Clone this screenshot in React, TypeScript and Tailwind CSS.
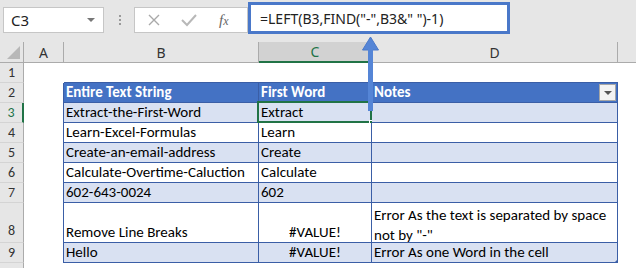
import React from 'react';

const blue = 'border-[#3a5ea6]';

type Row = {
  n: number;
  h: string;
  cells?: [string, string, string];
  kind?: 'head' | 'band' | 'plain';
};

const rows: Row[] = [
  { n: 1, h: 'h-[20px]' },
  { n: 2, h: 'h-[20px]', cells: ['Entire Text String', 'First Word', 'Notes'], kind: 'head' },
  { n: 3, h: 'h-[20px]', cells: ['Extract-the-First-Word', 'Extract', ''], kind: 'band' },
  { n: 4, h: 'h-[20px]', cells: ['Learn-Excel-Formulas', 'Learn', ''], kind: 'plain' },
  { n: 5, h: 'h-[20px]', cells: ['Create-an-email-address', 'Create', ''], kind: 'band' },
  { n: 6, h: 'h-[20px]', cells: ['Calculate-Overtime-Caluction', 'Calculate', ''], kind: 'plain' },
  { n: 7, h: 'h-[20px]', cells: ['602-643-0024', '602', ''], kind: 'band' },
  { n: 8, h: 'h-[40px]', cells: ['Remove Line Breaks', '#VALUE!', 'Error As the text is separated by space not by "-"'], kind: 'plain' },
  { n: 9, h: 'h-[20px]', cells: ['Hello', '#VALUE!', 'Error As one Word in the cell'], kind: 'band' },
  { n: 10, h: 'h-[20px]' },
];

function SheetRow({ row }: { row: Row }) {
  const inTable = !!row.cells;
  const bg = row.kind === 'head' ? 'bg-[#4472c4] text-white font-bold' : row.kind === 'band' ? 'bg-[#d9e1f2]' : 'bg-white';
  const lineB = row.n === 1 || inTable ? `border-b ${blue}` : '';
  const selected = row.n === 3;
  return (
    <div className={`flex ${row.h} shrink-0`}>
      <div
        className={`w-[24px] shrink-0 flex items-center justify-center bg-[#e6e6e6] border-b border-[#d4d4d4] text-[14px] ${
          selected ? 'border-r-2 border-r-[#217346] bg-[#d2d2d2] text-[#217346]' : 'border-r border-r-[#ababab] text-[#333]'
        } ${row.n === 8 ? 'items-end pb-[1px]' : ''}`}
      >
        {row.n < 10 ? row.n : ''}
      </div>
      <div className={`w-[40px] shrink-0 bg-white ${inTable ? `border-r ${blue}` : ''}`} />
      {(['w-[195px]', 'w-[113px]', 'w-[246px]'] as const).map((w, i) => {
        const text = row.cells ? row.cells[i] : '';
        const isValue = text === '#VALUE!';
        const wrap = row.n === 8 && i === 2;
        return (
          <div
            key={i}
            className={`${w} shrink-0 relative flex px-[2px] ${inTable ? `border-r ${blue} ${bg}` : 'bg-white'} ${lineB} ${
              isValue ? 'justify-center' : ''
            } ${wrap ? 'items-start pt-[2px] leading-[20px]' : 'items-end leading-[19px]'}`}
          >
            <span className="whitespace-pre-wrap">{text}</span>
            {selected && i === 1 && (
              <>
                <div className="absolute -left-[2px] -top-[2px] -right-[1px] -bottom-[1px] border-2 border-[#217346]" />
                <div className="absolute -right-[4px] -bottom-[4px] w-[6px] h-[6px] bg-[#217346] border border-white" />
              </>
            )}
            {row.kind === 'head' && i === 2 && (
              <div className="absolute right-[1px] top-[1px] w-[17px] h-[17px] bg-[#f3f3f3] border border-[#a6a6a6] flex items-center justify-center">
                <div className="w-0 h-0 border-l-[4px] border-r-[4px] border-t-[4px] border-l-transparent border-r-transparent border-t-[#555]" />
              </div>
            )}
            {row.n === 9 && i === 2 && (
              <div className="absolute -right-[1px] -bottom-[1px] w-0 h-0 border-l-[4px] border-b-[4px] border-l-transparent border-b-[#3a5ea6]" />
            )}
          </div>
        );
      })}
      <div className="flex-1 bg-white" />
    </div>
  );
}

export default function App() {
  return (
    <div
      className="w-[636px] h-[268px] overflow-hidden bg-[#e6e6e6] relative flex flex-col text-[15px] text-black"
      style={{ fontFamily: 'Carlito, Calibri, Lato, sans-serif' }}
    >
      {/* Formula bar */}
      <div className="h-[42px] shrink-0 flex items-start" style={{ fontFamily: '"Segoe UI", "Noto Sans", sans-serif' }}>
        <div className="mt-[7px] ml-[3px] w-[101px] h-[26px] bg-white border border-[#c6c6c6] flex items-center justify-between pl-[7px] pr-[8px] text-[15px] text-[#222]">
          <span>C3</span>
          <div className="w-0 h-0 border-l-[4px] border-r-[4px] border-t-[4px] border-l-transparent border-r-transparent border-t-[#777]" />
        </div>
        <div className="mt-[15px] ml-[15px] flex flex-col gap-[2px]">
          <div className="w-[2px] h-[2px] bg-[#9a9a9a]" />
          <div className="w-[2px] h-[2px] bg-[#9a9a9a]" />
          <div className="w-[2px] h-[2px] bg-[#9a9a9a]" />
        </div>
        <div className="mt-[7px] ml-[13px] w-[114px] h-[26px] bg-white border border-[#c6c6c6] flex items-center">
          <svg width="14" height="14" viewBox="0 0 14 14" className="ml-[12px]">
            <path d="M2 2 L12 12 M12 2 L2 12" stroke="#a9a9a9" strokeWidth="1.4" />
          </svg>
          <svg width="16" height="14" viewBox="0 0 16 14" className="ml-[20px]">
            <path d="M1 7 L6 12 L15 2" stroke="#b8b8b8" strokeWidth="2" fill="none" />
          </svg>
          <span className="ml-[22px] text-[15px] italic text-[#666]" style={{ fontFamily: '"Liberation Serif", serif' }}>
            f<span className="text-[12px]">x</span>
          </span>
        </div>
        <div className="mt-[2px] w-[262px] h-[32px] bg-white border-[3px] border-[#4a78c9] flex items-center pl-[9px] text-[14px] text-[#222]">
          =LEFT(B3,FIND("-",B3&amp;" ")-1)
        </div>
      </div>

      {/* Column headers */}
      <div className="flex h-[21px] shrink-0 border-b border-[#ababab] text-[14px] text-[#333]" style={{ fontFamily: '"Segoe UI", "Noto Sans", sans-serif' }}>
        <div className="w-[24px] shrink-0 border-r border-[#ababab] flex items-end justify-end pr-[3px] pb-[3px]">
          <svg width="13" height="13" viewBox="0 0 13 13">
            <polygon points="13,0 13,13 0,13" fill="#b8b8b8" />
          </svg>
        </div>
        <div className="w-[40px] shrink-0 border-r border-[#ababab] flex items-center justify-center">A</div>
        <div className="w-[195px] shrink-0 border-r border-[#ababab] flex items-center justify-center">B</div>
        <div className="w-[113px] shrink-0 border-r border-[#ababab] flex items-center justify-center bg-[#d2d2d2] text-[#217346] border-b-2 border-b-[#217346] -mb-[1px]">C</div>
        <div className="w-[246px] shrink-0 border-r border-[#ababab] flex items-center justify-center">D</div>
        <div className="flex-1" />
      </div>

      {rows.map((r) => (
        <SheetRow key={r.n} row={r} />
      ))}

      {/* Arrow from formula bar to C3 */}
      <svg className="absolute left-[360px] top-[35px]" width="22" height="80" viewBox="0 0 22 80">
        <polygon points="2.5,15 10.5,2 18.5,15" fill="#5585d6" stroke="#4a78c9" strokeWidth="1" />
        <rect x="8" y="14" width="5" height="62" fill="#5585d6" />
      </svg>
    </div>
  );
}
